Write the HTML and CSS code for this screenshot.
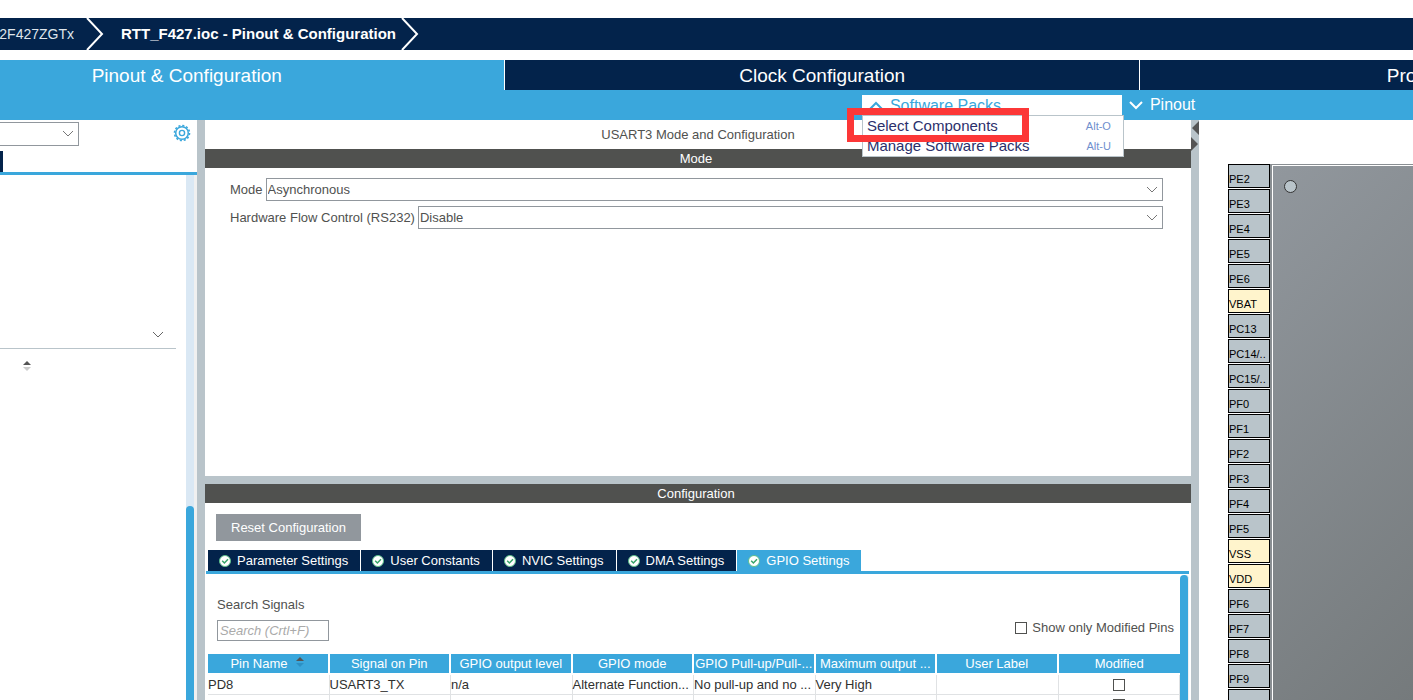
FILE: index.html
```html
<!DOCTYPE html>
<html lang="en">
<head>
<meta charset="utf-8">
<title>RTT_F427.ioc - Pinout &amp; Configuration</title>
<link rel="stylesheet" href="styles.css">
</head>
<body>
<nav class="crumbs">
  <a class="crumb crumb-device" href="#"><span>STM32F427ZGTx</span></a>
  <svg class="crumb-sep" width="18" height="32" viewBox="0 0 18 32"><path d="M1 0L16 16L1 32" fill="none" stroke="#fff" stroke-width="2"/></svg>
  <a class="crumb crumb-file" href="#">RTT_F427.ioc - Pinout &amp; Configuration</a>
  <svg class="crumb-sep" width="18" height="32" viewBox="0 0 18 32"><path d="M1 0L16 16L1 32" fill="none" stroke="#fff" stroke-width="2"/></svg>
</nav>

<div class="main-tabs">
  <button class="main-tab active">Pinout &amp; Configuration</button>
  <button class="main-tab">Clock Configuration</button>
  <button class="main-tab">Project Manager</button>
</div>

<div class="toolbar">
  <div class="menu">
    <button class="menu-button open"><svg width="14" height="9" viewBox="0 0 14 9"><path d="M1 8L7 2L13 8" fill="none" stroke="currentColor" stroke-width="2"/></svg>Software Packs</button>
    <div class="popup">
      <button class="popup-item"><span>Select Components</span><kbd>Alt-O</kbd></button>
      <button class="popup-item"><span>Manage Software Packs</span><kbd>Alt-U</kbd></button>
    </div>
    <div class="highlight"></div>
  </div>
  <button class="menu-button"><svg width="14" height="9" viewBox="0 0 14 9"><path d="M1 1L7 7L13 1" fill="none" stroke="currentColor" stroke-width="2"/></svg>Pinout</button>
</div>

<main class="workspace">
  <aside class="sidebar">
    <div class="side-search">
      <div class="select-wrap side-select">
        <select aria-label="Search"><option></option></select>
        <svg class="chevron" width="12" height="7" viewBox="0 0 12 7"><path d="M1 1L6 6L11 1" fill="none" stroke="#777" stroke-width="1"/></svg>
      </div>
      <button class="gear" aria-label="Settings"><svg width="18" height="18" viewBox="0 0 18 18" fill="none" stroke="#3aa7dc"><circle cx="9" cy="9" r="6.3" stroke-width="1.5"/><circle cx="9" cy="9" r="7.5" stroke-width="1.6" stroke-dasharray="2.1 1.827"/><circle cx="9" cy="9" r="2.6" stroke-width="1.4"/></svg></button>
    </div>
    <div class="side-tabs"><span class="side-tab"></span></div>
    <div class="side-body">
      <div class="side-list">
        <button class="side-group" aria-label="Expand group"><svg width="12" height="7" viewBox="0 0 12 7"><path d="M1 1L6 6L11 1" fill="none" stroke="#666" stroke-width="1"/></svg></button>
        <button class="side-sort" aria-label="Sort"><svg width="10" height="12" viewBox="0 0 10 12"><path d="M1 5L5 1L9 5Z" fill="#555"/><path d="M1 7L5 11L9 7Z" fill="#ccc"/></svg></button>
      </div>
      <div class="side-scroll"><div class="side-thumb"></div></div>
    </div>
  </aside>
  <div class="splitter"></div>

  <section class="center">
    <div class="mode-panel">
      <h1 class="title">USART3 Mode and Configuration</h1>
      <h2 class="bar">Mode</h2>
      <div class="mode-form">
        <div class="field">
          <label for="mode">Mode</label>
          <div class="select-wrap"><select id="mode"><option>Asynchronous</option></select><svg class="chevron" width="12" height="7" viewBox="0 0 12 7"><path d="M1 1L6 6L11 1" fill="none" stroke="#777" stroke-width="1"/></svg></div>
        </div>
        <div class="field">
          <label for="flow">Hardware Flow Control (RS232)</label>
          <div class="select-wrap"><select id="flow"><option>Disable</option></select><svg class="chevron" width="12" height="7" viewBox="0 0 12 7"><path d="M1 1L6 6L11 1" fill="none" stroke="#777" stroke-width="1"/></svg></div>
        </div>
      </div>
    </div>
    <div class="config-panel">
      <h2 class="bar">Configuration</h2>
      <button class="reset">Reset Configuration</button>
      <div class="tabs">
        <button class="tab"><svg width="12" height="12" viewBox="0 0 12 12"><circle cx="6" cy="6" r="5.5" fill="#fff" stroke="#5cbf8a"/><path d="M3.2 5.8L5.4 8L9 4.3" fill="none" stroke="#35a468" stroke-width="1.5"/></svg>Parameter Settings</button>
        <button class="tab"><svg width="12" height="12" viewBox="0 0 12 12"><circle cx="6" cy="6" r="5.5" fill="#fff" stroke="#5cbf8a"/><path d="M3.2 5.8L5.4 8L9 4.3" fill="none" stroke="#35a468" stroke-width="1.5"/></svg>User Constants</button>
        <button class="tab"><svg width="12" height="12" viewBox="0 0 12 12"><circle cx="6" cy="6" r="5.5" fill="#fff" stroke="#5cbf8a"/><path d="M3.2 5.8L5.4 8L9 4.3" fill="none" stroke="#35a468" stroke-width="1.5"/></svg>NVIC Settings</button>
        <button class="tab"><svg width="12" height="12" viewBox="0 0 12 12"><circle cx="6" cy="6" r="5.5" fill="#fff" stroke="#5cbf8a"/><path d="M3.2 5.8L5.4 8L9 4.3" fill="none" stroke="#35a468" stroke-width="1.5"/></svg>DMA Settings</button>
        <button class="tab active"><svg width="12" height="12" viewBox="0 0 12 12"><circle cx="6" cy="6" r="5.5" fill="#fff" stroke="#5cbf8a"/><path d="M3.2 5.8L5.4 8L9 4.3" fill="none" stroke="#35a468" stroke-width="1.5"/></svg>GPIO Settings</button>
      </div>
      <div class="tab-body">
        <div class="gpio">
          <div class="filters">
            <div class="search"><label for="signals">Search Signals</label><input id="signals" type="text" placeholder="Search (Crtl+F)"></div>
            <label class="only-modified"><input type="checkbox">Show only Modified Pins</label>
          </div>
          <table>
            <thead><tr><th>Pin Name <svg width="10" height="12" viewBox="0 0 10 12"><path d="M1 5L5 1L9 5Z" fill="#555"/><path d="M1 7L5 11L9 7Z" fill="#2c90c4"/></svg></th><th>Signal on Pin</th><th>GPIO output level</th><th>GPIO mode</th><th>GPIO Pull-up/Pull-...</th><th>Maximum output ...</th><th>User Label</th><th>Modified</th></tr></thead>
            <tbody>
              <tr><td>PD8</td><td>USART3_TX</td><td>n/a</td><td>Alternate Function...</td><td>No pull-up and no ...</td><td>Very High</td><td></td><td class="check"><input type="checkbox" aria-label="PD8 modified"></td></tr>
              <tr><td>PD9</td><td>USART3_RX</td><td>n/a</td><td>Alternate Function...</td><td>No pull-up and no ...</td><td>Very High</td><td></td><td class="check"><input type="checkbox" aria-label="PD9 modified"></td></tr>
            </tbody>
          </table>
        </div>
        <div class="gpio-scroll"></div>
      </div>
    </div>
  </section>

  <div class="splitter">
    <svg width="8" height="32" viewBox="0 0 8 32"><path d="M8 1V15L1 8Z M0 17V31L7 24Z" fill="#555"/></svg>
  </div>

  <section class="canvas">
    <ul class="pins">
      <li>PE2</li><li>PE3</li><li>PE4</li><li>PE5</li><li>PE6</li><li class="power">VBAT</li><li>PC13</li><li>PC14/..</li><li>PC15/..</li><li>PF0</li><li>PF1</li><li>PF2</li><li>PF3</li><li>PF4</li><li>PF5</li><li class="power">VSS</li><li class="power">VDD</li><li>PF6</li><li>PF7</li><li>PF8</li><li>PF9</li><li></li>
    </ul>
    <div class="chip"><div class="chip-face"><span class="dot"></span></div></div>
  </section>
</main>
</body>
</html>
```

FILE: styles.css
```css
* { box-sizing: border-box; }
body {
  margin: 0;
  height: 100vh;
  display: flex;
  flex-direction: column;
  overflow: hidden;
  background: #fff;
  color: #50514f;
  font: 13px/16px "Liberation Sans", Arial, sans-serif;
}
button, input, select { font: inherit; color: inherit; border-radius: 0; }
button { border: 0; padding: 0; background: none; }
h1, h2 { margin: 0; font-size: 13px; font-weight: normal; text-align: center; }
svg { display: block; flex: none; }

.crumbs {
  flex: none;
  display: flex;
  align-items: center;
  height: 32px;
  margin: 18px 0 10px;
  background: #03234b;
}
.crumb { color: #fff; text-decoration: none; white-space: nowrap; }
.crumb-device {
  display: flex;
  justify-content: flex-end;
  width: 74px;
  margin-right: 12px;
  overflow: hidden;
  font-size: 14px;
  color: #dfe5ec;
}
.crumb-file { margin: 0 5px 0 17px; font-size: 15px; font-weight: bold; }

.main-tabs {
  flex: none;
  display: grid;
  grid-template-columns: 35.7% 44.9% 44.9%;
  height: 30px;
  overflow: hidden;
}
.main-tab {
  padding-top: 2px;
  background: #03234b;
  color: #fff;
  font-size: 19px;
  border-left: 1px solid #fff;
}
.main-tab.active { background: #3aa7dc; border-left: 0; padding-right: 131px; }

.toolbar {
  flex: none;
  display: flex;
  height: 30px;
  padding: 5px 0 0 61%;
  background: #3aa7dc;
}
.menu { position: relative; z-index: 2; width: 260px; margin-right: 7px; }
.menu-button {
  display: flex;
  align-items: center;
  gap: 7px;
  height: 20px;
  color: #fff;
  font-size: 16px;
}
.menu-button.open { width: 100%; height: 21px; padding-left: 7px; background: #fff; color: #3aa7dc; }
.popup {
  position: absolute;
  top: 20px;
  left: 0;
  width: 262px;
  background: #fff;
  border: 1px solid #b9c4ca;
}
.popup-item {
  display: flex;
  align-items: center;
  justify-content: space-between;
  width: 100%;
  height: 20px;
  padding: 0 12px 0 4px;
  color: #2b2f6b;
  font-size: 15px;
}
kbd { font: 11px "Liberation Sans", Arial, sans-serif; color: #6f8fce; }
.highlight {
  position: absolute;
  top: 13px;
  left: -15px;
  width: 182px;
  height: 34px;
  border: 7px solid #fc3737;
}

.workspace {
  flex: 1;
  min-height: 0;
  display: grid;
  grid-template-columns: 197px 8px minmax(0, 1fr) 8px 214px;
}
.splitter { background: #b9c4ca; }

.sidebar { display: flex; flex-direction: column; min-height: 0; }
.side-search { display: flex; justify-content: space-between; align-items: flex-start; padding: 2px 6px 5px 0; }
.select-wrap { position: relative; flex: 1; }
.select-wrap select {
  appearance: none;
  display: block;
  width: 100%;
  height: 23px;
  padding: 0 20px 0 1px;
  border: 1px solid #91979d;
  background: #fff;
}
.chevron { position: absolute; right: 5px; top: 8px; pointer-events: none; }
.side-select { flex: none; width: 79px; }
.side-select select { height: 24px; border-left: 0; }
.gear { padding-top: 2px; }
.side-tabs { height: 24px; border-bottom: 3px solid #3aa7dc; }
.side-tab { display: block; width: 3px; height: 21px; background: #03234b; }
.side-body { flex: 1; display: flex; }
.side-list { flex: 1; padding: 146px 10px 0 0; }
.side-group {
  display: flex;
  justify-content: flex-end;
  align-items: center;
  width: 100%;
  height: 28px;
  padding-right: 12px;
  border-bottom: 1px solid #b9c4ca;
}
.side-sort { padding: 11px 22px; }
.side-scroll { width: 11px; padding-top: 331px; background: #dae8f4; border-right: 3px solid #f0f0f0; }
.side-thumb { height: 100%; background: #3aa7dc; border-radius: 4px 4px 0 0; }

.center { display: flex; flex-direction: column; min-height: 0; overflow: hidden; }
.mode-panel { flex: 0 0 364px; border-bottom: 8px solid #b9c4ca; }
.title { padding: 7px 0 6px; }
.bar { height: 19px; padding-right: 4px; line-height: 19px; background: #50514f; color: #fff; }
.mode-form { display: grid; gap: 5px; padding: 10px 28px 0 25px; }
.field { display: flex; align-items: center; gap: 3px; }

.config-panel { flex: 1; min-height: 0; display: flex; flex-direction: column; align-items: stretch; }
.config-panel > * { flex: none; }
.reset {
  align-self: flex-start;
  height: 27px;
  margin: 11px 0 9px 11px;
  padding: 0 15px;
  background: #91979d;
  color: #fff;
}
.tabs { display: flex; gap: 1px; margin: 0 2px 0 1px; padding-left: 2px; border-bottom: 3px solid #3aa7dc; }
.tab { display: flex; align-items: center; gap: 6px; height: 21px; padding: 0 12px 0 11px; background: #03234b; color: #fff; }
.tab.active { background: #3aa7dc; }
.config-panel .tab-body { flex: 1; display: flex; min-height: 0; margin-right: 2px; }
.gpio { flex: 1; min-width: 0; overflow: hidden; padding: 23px 0 0 3px; }
.gpio-scroll { width: 9px; margin-top: 1px; background: #3aa7dc; border-right: 1px solid #f0f0f0; border-radius: 4px 4px 0 0; }
.filters { display: flex; justify-content: space-between; align-items: flex-end; padding: 0 6px 13px 9px; }
.search { display: grid; gap: 7px; }
.search input { width: 112px; height: 21px; padding: 0 2px; border: 1px solid #91979d; }
.search input::placeholder { color: #aaa; font-style: italic; opacity: 1; }
.only-modified { display: flex; align-items: center; gap: 5px; padding-bottom: 5px; }
input[type="checkbox"] { appearance: none; width: 12px; height: 12px; margin: 0; border: 1px solid #50514f; background: #fff; }

table { width: 100%; table-layout: fixed; border-collapse: separate; border-spacing: 0; }
th, td { padding: 0; height: 20px; white-space: nowrap; }
th {
  height: 21px;
  background: #3aa7dc;
  color: #fff;
  font-weight: normal;
  border-right: 2px solid #fff;
  border-bottom: 2px solid #fff;
}
th svg { display: inline-block; margin-left: 4px; }
td { color: #2f302f; border-right: 1px solid #e0e2e4; border-bottom: 1px solid #e0e2e4; }
th:last-child { border-right: 0; }
.check { text-align: center; line-height: 12px; }
.check input { vertical-align: middle; }

.canvas { display: flex; align-items: flex-start; min-height: 0; overflow: hidden; padding: 44px 0 0 29px; }
.pins { display: grid; gap: 1px; width: 42px; margin: 0; padding: 0; list-style: none; font-size: 11px; color: #000; }
.pins li { height: 24px; padding-top: 7px; border: 1px solid #000; background: #b9c4ca; line-height: 15px; }
.pins .power { background: #fff4cc; }
.chip { flex: 1; align-self: stretch; padding: 1px 0 0 2px; background: #8a8f93; }
.chip-face {
  height: 100%;
  padding: 14px 11px;
  border: solid #fff;
  border-width: 1px 0 0 1px;
  background: linear-gradient(135deg, #91979d, #757a7c);
}
.dot { display: block; width: 13px; height: 13px; border: 1px solid #333; border-radius: 50%; background: #b9c4ca; }
```
